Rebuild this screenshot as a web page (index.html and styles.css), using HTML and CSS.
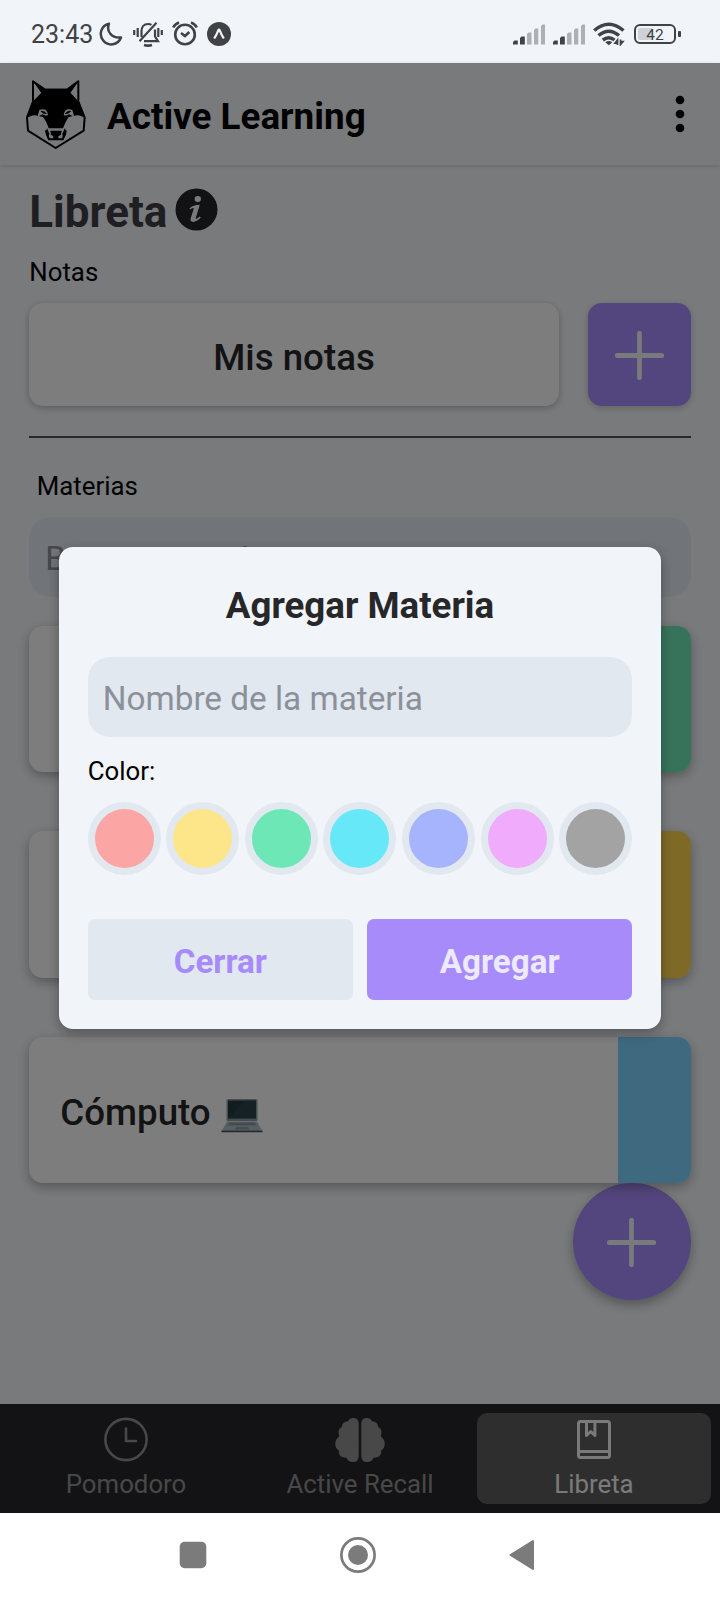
FILE: index.html
```html
<!DOCTYPE html>
<html lang="es">
<head>
<meta charset="utf-8">
<title>Active Learning</title>
<link rel="stylesheet" href="styles.css">
</head>
<body>
<div class="status">
  <span class="clock">23:43</span>
  <svg class="moon" width="24" height="24" viewBox="0 0 24 24" fill="none" stroke="#414245" stroke-width="2.500" stroke-linejoin="round"><path d="M10 1.800C7 9 12.500 16.500 22 15.500C19 23.500 9 24.500 4.200 18.500C-.8 12 2.500 3.500 10 1.800Z"/></svg>
  <svg class="bell" width="30" height="26" viewBox="0 0 30 26" fill="none" stroke="#414245" stroke-width="2.200"><path d="M1.200 9v5M4.700 7v9M28.800 9v5M25.300 7v9M6.500 20.200L23.500 1.800M8.500 16V10.500C8.500 5.500 11 3 15 3c1.500 0 2.500.3 3.500.9M22 8.500v7l3 4.700H11"/><path stroke-width="2.800" d="M11 24q4 1.200 8 0"/></svg>
  <svg class="alarm" width="26" height="25" viewBox="0 0 26 25" fill="none" stroke="#414245" stroke-width="2.600"><circle cx="13" cy="13.500" r="9.800"/><path d="M1.200 6.500Q3 2.800 7 1.500M24.800 6.500Q23 2.800 19 1.500M9 12l4 3 4.300-4"/></svg>
  <svg class="expo" width="24" height="24" viewBox="0 0 24 24"><circle cx="12" cy="12" r="12" fill="#414245"/><path d="M7.200 16.500Q10 12 11.200 8.500q.8-1.500 1.600 0Q14 12 16.800 16.500" fill="none" stroke="#f1f5f9" stroke-width="2.300"/></svg>
  <svg class="signal" width="32" height="22" viewBox="0 0 32 22"><path fill="#414245" d="M0 20.500v-2.500l1.500-1.500h3.300v4zM7 20.500v-6.500l1.500-1.500h3.300v8z"/><path fill="#adafb2" d="M14 20.500V10l1.500-1.500h3v12zM21 20.500V6l1.500-1.500h2.800v16zM28 20.500V2l1.500-1.500H32v20z"/></svg>
  <svg class="signal second" width="32" height="22" viewBox="0 0 32 22"><path fill="#414245" d="M0 20.500v-2.500l1.500-1.500h3.300v4zM7 20.500v-6.500l1.500-1.500h3.300v8z"/><path fill="#adafb2" d="M14 20.500V10l1.500-1.500h3v12zM21 20.500V6l1.500-1.500h2.800v16zM28 20.500V2l1.500-1.500H32v20z"/></svg>
  <svg class="wifi" width="32" height="24" viewBox="0 0 32 24" fill="none" stroke="#414245" stroke-width="3.500"><path d="M1.200 8.500Q15.800-4 30.500 8.500M5.500 13.500Q15.800 5 26 13.500M9.800 18Q15.800 13.500 21.500 18"/><path d="M12.300 20.300q3.500-2.500 7 0l-3.500 3z" fill="#414245" stroke="none"/><path stroke-width="1.700" d="M24.500 23v-5l-2.500 3.200h2.500M27.500 17.500v5l2.500-3h-2.500"/></svg>
  <span class="battery"><span class="level">42</span></span><i class="battery-tip"></i>
</div>

<div class="app">
  <header class="header">
    <svg class="wolf" width="62" height="71" viewBox="75 238 186 213">
      <g fill="none" stroke="#000" stroke-width="6" stroke-linejoin="round"><path d="M99 245V306L81 353L84 393L167 445L251 393L254 353L235 306V245L201 270H135Z"/><path d="M137 392L147 419H188L198 392"/></g>
      <path d="M96 308L136 267H200L238 308L257 358Q240 342 220 349L206 352Q197 364 189 386H146Q139 364 129 352L115 349Q96 342 79 358Z"/>
      <path d="M151 393h34l-2 12-8 5v9h-15v-9l-7-5zM99 244l37 27-12 9zM236 244l-37 27 12 9zM141 385L137 402L145 420L148 402ZM195 385L199 402L190 420L187 402Z"/>
      <path fill="#f1f5f9" d="M118 331Q128 326 137 331Q143 336 144 346Q136 350 128 344L112 352ZM217 331Q207 326 198 331Q192 336 191 346Q199 350 207 344L223 352Z"/>
      <path d="M121 334Q132 330 141 343Q131 344 127 339ZM214 334Q203 330 194 343Q204 344 208 339Z"/>
    </svg>
    <h1 class="brand">Active Learning</h1>
    <svg class="kebab" width="10" height="38" viewBox="0 0 10 38"><circle cx="5" cy="5" r="4.300"/><circle cx="5" cy="19" r="4.300"/><circle cx="5" cy="33" r="4.300"/></svg>
  </header>

  <main class="content">
    <div class="heading">
      <h2 class="page-title">Libreta</h2>
      <svg class="info" width="43" height="43" viewBox="0 0 43 43"><circle cx="21.500" cy="21.500" r="21" fill="#252529"/><ellipse cx="22.800" cy="11" rx="3.200" ry="2.900" fill="#f1f5f9"/><path fill="#f1f5f9" d="M14.500 20.500Q18 16.800 24.800 16.800L20.800 29.800Q20.500 31.500 22.500 30.200L24.800 28.500L25.800 29.500Q21 34.500 17.200 33.800Q14.800 33.300 15.800 30L18.800 20.500Q18.500 19.200 15 21.500Z"/></svg>
    </div>
    <p class="label">Notas</p>
    <div class="notes">
      <div class="notes-card">Mis notas</div>
      <div class="add-note"><svg width="49" height="49" viewBox="0 0 49 49"><path class="plus" d="M24.500 2.300v44.400M2.300 24.500h44.400"/></svg></div>
    </div>
    <hr class="rule">
    <p class="label subjects-label">Materias</p>
    <div class="search">Buscar materia</div>
    <div class="subjects">
      <div class="subject"><i class="stripe green"></i></div>
      <div class="subject"><i class="stripe amber"></i></div>
      <div class="subject">
        <span class="subject-name">Cómputo</span>
        <svg class="laptop" width="42" height="36" viewBox="0 0 42 36"><rect x="5.500" y="1" width="31" height="22" rx="1.500" fill="#8b9da6"/><rect x="7" y="2.500" width="28" height="18" fill="#26383f"/><path fill="#344c55" d="M7 20.500L24 2.500h11v18z" opacity=".5"/><path fill="#b0bec5" d="M6 23.500h30l5 9H1z"/><path fill="#8899a1" d="M8 24.500h26l1.500 3h-29zM15 29h12l1 2.500H14z"/><path fill="#3c5360" d="M.5 32.500h41v1.800H.5z"/></svg>
        <i class="stripe blue"></i>
      </div>
    </div>
    <div class="fab"><svg width="49" height="49" viewBox="0 0 49 49"><path class="plus" d="M24.500 2.300v44.400M2.300 24.500h44.400"/></svg></div>
  </main>

  <nav class="tabs">
    <div class="tab">
      <svg width="50" height="46" viewBox="0 0 50 46" fill="none" stroke="#909090" stroke-width="2.600" stroke-linecap="round" stroke-linejoin="round"><circle cx="25" cy="22.500" r="20.600"/><path d="M25 11.500v12.500h10"/></svg>
      <span>Pomodoro</span>
    </div>
    <div class="tab">
      <svg width="50" height="46" viewBox="0 0 50 46" fill="#909090"><path d="M23.700 6.500Q23.500 1 18.500 1Q14.500 1 13 4.300Q7.500 4.500 6.800 10Q2.700 12 3.800 17Q4 18.500 4.300 19.500Q.3 22 .3 27Q.4 31.500 3.800 33.500Q3.500 39 8 40.300Q10 41 11.500 40.700Q13 45 18 45Q23.300 45 23.700 39.500Z"/><path d="M26.300 6.500Q26.500 1 31.500 1Q35.500 1 37 4.300Q42.500 4.500 43.200 10Q47.300 12 46.200 17Q46 18.500 45.700 19.500Q49.700 22 49.700 27Q49.600 31.500 46.200 33.500Q46.500 39 42 40.300Q40 41 38.500 40.700Q37 45 32 45Q26.700 45 26.300 39.500Z"/></svg>
      <span>Active Recall</span>
    </div>
    <div class="tab active">
      <svg width="50" height="46" viewBox="0 0 50 46" fill="none" stroke="#f4f4f5" stroke-width="3" stroke-linejoin="round"><rect x="9.500" y="4.500" width="31" height="36" rx="2"/><path d="M9.500 34.500h31M17.500 5v13.500l4.200-4 4.200 4V5"/></svg>
      <span>Libreta</span>
    </div>
  </nav>

  <div class="overlay">
    <section class="modal">
      <h3 class="modal-title">Agregar Materia</h3>
      <div class="field">Nombre de la materia</div>
      <p class="label color-label">Color:</p>
      <div class="swatches">
        <i class="swatch red"></i><i class="swatch yellow"></i><i class="swatch mint"></i><i class="swatch cyan"></i><i class="swatch indigo"></i><i class="swatch pink"></i><i class="swatch gray"></i>
      </div>
      <div class="actions">
        <div class="button secondary">Cerrar</div>
        <div class="button primary">Agregar</div>
      </div>
    </section>
  </div>
</div>

<div class="system-nav">
  <svg width="28" height="28" viewBox="0 0 28 28"><rect x=".7" y=".7" width="26.600" height="26.600" rx="5" fill="#7b7b7b"/></svg>
  <svg width="38" height="38" viewBox="0 0 38 38"><circle cx="19" cy="19" r="16.600" fill="none" stroke="#7b7b7b" stroke-width="2.700"/><circle cx="19" cy="19" r="10" fill="#7b7b7b"/></svg>
  <svg width="28" height="32" viewBox="0 0 28 32"><path d="M2.500 16L25 2V30Z" fill="#7b7b7b" stroke="#7b7b7b" stroke-width="2" stroke-linejoin="round"/></svg>
</div>
</body>
</html>
```
FILE: styles.css
```css
* { box-sizing: border-box; }
body { margin: 0; width: 720px; height: 1600px; overflow: hidden; background: #f1f5f9; font-family: Roboto, "Liberation Sans", sans-serif; color: #000; }
h1, h2, h3, p { margin: 0; }
svg { display: block; flex: none; }

.status { height: 63px; padding-left: 31px; display: flex; align-items: flex-start; color: #414245; }
.clock { width: 63px; margin-top: 20px; font-size: 25px; line-height: 30px; white-space: nowrap; }
.moon { margin: 22px 0 0 5px; }
.bell { margin: 21px 0 0 10px; }
.alarm { margin: 21px 0 0 9px; }
.expo { margin: 22px 0 0 9px; }
.signal { margin: 24px 0 0 282px; }
.signal.second { margin-left: 8px; }
.wifi { margin: 22px 0 0 8px; }
.battery { width: 42px; height: 20px; margin: 24px 0 0 9px; padding: 2px; border: 2px solid #414245; border-radius: 6px; display: flex; }
.level { flex: 1; border-radius: 2px; background: linear-gradient(90deg, #cfd1d4 42%, transparent 42%); font-size: 15.500px; line-height: 14px; text-align: center; }
.battery-tip { width: 3px; height: 6px; margin: 31px 0 0 2px; border-radius: 1px; background: #414245; }

.app { position: relative; height: 1450px; display: flex; flex-direction: column; background: #f1f5f9; }
.header { height: 102px; padding: 0 35px 0 25px; display: flex; align-items: center; box-shadow: 0 1px 4px rgba(0,0,0,.16); }
.brand { flex: 1; margin: 6px 0 0 20px; font-size: 36.850px; line-height: 44px; font-weight: 700; }
.content { flex: 1; padding: 25px 29.300px 0; }
.heading { height: 44px; display: flex; align-items: center; gap: 8px; }
.page-title { font-size: 44px; line-height: 44px; color: #3f3f46; font-weight: 700; }
.info { margin-top: -5px; }
.label { margin-top: 21px; font-size: 25.800px; line-height: 34px; }
.notes { margin-top: 14px; height: 103px; display: flex; justify-content: space-between; }
.notes-card { width: 529.500px; padding-top: 6px; border-radius: 14px; background: #fafbfc; box-shadow: 0 2px 7px rgba(0,0,0,.25); display: flex; align-items: center; justify-content: center; font-size: 36.700px; font-weight: 500; color: #27272a; }
.add-note { width: 103px; padding-top: 1px; border-radius: 14px; background: #a78bfa; box-shadow: 0 2px 7px rgba(0,0,0,.2); display: flex; align-items: center; justify-content: center; }
.plus { fill: none; stroke: #f1f5f9; stroke-width: 4.800; stroke-linecap: round; }
.rule { height: 2px; margin: 29.500px 0 0; border: 0; background: #52525b; }
.subjects-label { margin: 31.500px 0 0 7.500px; }
.search { height: 80px; margin-top: 14px; padding: 3px 16px 0; border-radius: 22px; background: #e2e8f0; font-size: 32.800px; line-height: 78px; color: #8b8f96; }
.subjects { margin-top: 29px; display: flex; flex-direction: column; gap: 59px; }
.subject { height: 146.300px; padding-left: 31px; border-radius: 14px; background: #fafbfc; box-shadow: 0 4px 12px rgba(0,0,0,.3); display: flex; align-items: center; overflow: hidden; }
.subject-name { margin-top: 5px; font-size: 36.700px; font-weight: 500; color: #27272a; }
.laptop { margin: 12px 0 0 10px; }
.stripe { width: 73px; height: 100%; margin-left: auto; }
.green { background: #6ee7b7; }
.amber { background: #fcd34d; }
.blue { background: #7dd3fc; }
.fab { width: 117.500px; height: 117.500px; padding-top: 1px; margin-left: auto; border-radius: 50%; background: #a78bfa; box-shadow: 0 5px 12px rgba(0,0,0,.3); display: flex; align-items: center; justify-content: center; }

.tabs { height: 109px; padding: 9px; display: flex; background: #27272a; }
.tab { flex: 1; padding-top: 4px; border-radius: 10px; display: flex; flex-direction: column; align-items: center; gap: 6px; font-size: 25.800px; line-height: 30px; color: #909090; }
.tab.active { background: #5c5c5c; color: #f4f4f5; }

.overlay { position: absolute; inset: 0; background: rgba(0,0,0,.5); display: flex; align-items: center; justify-content: center; }
.modal { width: 602.500px; height: 482px; padding: 36px 29px 29px; border-radius: 14px; background: #f1f5f9; box-shadow: 0 4px 12px rgba(0,0,0,.3); }
.modal-title { font-size: 36.700px; line-height: 45px; font-weight: 700; text-align: center; color: #27272a; }
.field { height: 80px; margin-top: 29px; padding: 3px 15px 0; border-radius: 22px; background: #e2e8f0; font-size: 33.300px; line-height: 78px; color: #8b9099; white-space: nowrap; }
.color-label { margin-top: 17px; }
.swatches { margin-top: 14px; display: flex; justify-content: space-between; }
.swatch { width: 73px; height: 73px; border: 7px solid #e2e8f0; border-radius: 50%; }
.red { background: #fca5a5; }
.yellow { background: #fde68a; }
.mint { background: #6ee7b7; }
.cyan { background: #67e8f9; }
.indigo { background: #a5b4fc; }
.pink { background: #f0abfc; }
.gray { background: #a3a3a3; }
.actions { margin-top: 44px; display: flex; gap: 14px; }
.button { flex: 1; height: 81px; padding-top: 4px; border-radius: 7px; font-size: 33.200px; line-height: 78px; font-weight: 700; text-align: center; }
.secondary { background: #e2e8f0; color: #a78bfa; }
.primary { background: #a78bfa; color: #ede9fe; }

.system-nav { height: 87px; padding: 0 184px 4px 179px; display: flex; align-items: center; justify-content: space-between; background: #fff; }
```
